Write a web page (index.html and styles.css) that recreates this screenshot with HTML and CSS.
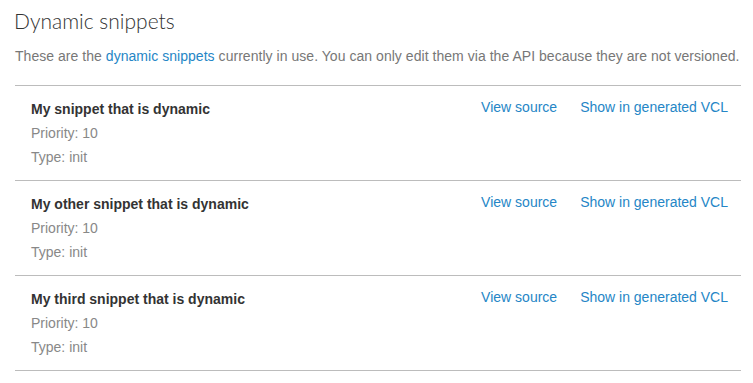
FILE: index.html
```html
<!doctype html>
<html lang="en">
  <head>
    <title>Dynamic snippets</title>
    <meta charset="UTF-8">
    <link rel="stylesheet" href="styles.css">
  </head>
  <body>
    <div class="page">
      <h1 class="pageTitle">Dynamic snippets</h1>
      <p class="intro">These are the <a href="#">dynamic snippets</a> currently in use. You can only edit them via the API because they are not versioned.</p>

      <div class="snippetList">
        <div class="snippet">
          <div class="snippetInfo">
            <div class="snippetName">My snippet that is dynamic</div>
            <div class="snippetMeta">Priority: 10</div>
            <div class="snippetMeta">Type: init</div>
          </div>
          <div class="snippetActions">
            <a href="#">View source</a>
            <a href="#">Show in generated VCL</a>
          </div>
        </div>
        <div class="snippet">
          <div class="snippetInfo">
            <div class="snippetName">My other snippet that is dynamic</div>
            <div class="snippetMeta">Priority: 10</div>
            <div class="snippetMeta">Type: init</div>
          </div>
          <div class="snippetActions">
            <a href="#">View source</a>
            <a href="#">Show in generated VCL</a>
          </div>
        </div>
        <div class="snippet">
          <div class="snippetInfo">
            <div class="snippetName">My third snippet that is dynamic</div>
            <div class="snippetMeta">Priority: 10</div>
            <div class="snippetMeta">Type: init</div>
          </div>
          <div class="snippetActions">
            <a href="#">View source</a>
            <a href="#">Show in generated VCL</a>
          </div>
        </div>
      </div>
    </div>
  </body>
</html>
```

FILE: styles.css
```css
body{
  margin: 0;
  background-color: #fff;
  font-family: "Liberation Sans", Arial, sans-serif;
  font-size: 14px;
}

.page{
  padding: 7px 12px 0 15px;
}

.pageTitle{
  margin: 0 0 0 -1px;
  font-family: Lato, "Open Sans", sans-serif;
  font-weight: 300;
  font-size: 21px;
  line-height: 28px;
  color: #333;
}

.intro{
  margin: 11px 0 0 0;
  line-height: 20px;
  color: #777;
  letter-spacing: 0.04px;
}

a{
  color: #2586c6;
  text-decoration: none;
}

.snippetList{
  margin-top: 19px;
  border-top: 1px solid #bcbcbc;
}

.snippet{
  display: flex;
  justify-content: space-between;
  padding: 11px 13px 11px 16px;
  border-bottom: 1px solid #bcbcbc;
}

.snippetName{
  font-weight: bold;
  line-height: 24px;
  color: #333;
}

.snippetMeta{
  line-height: 24px;
  color: #888;
}

.snippetActions{
  display: flex;
  gap: 23px;
  line-height: 20px;
}
```
